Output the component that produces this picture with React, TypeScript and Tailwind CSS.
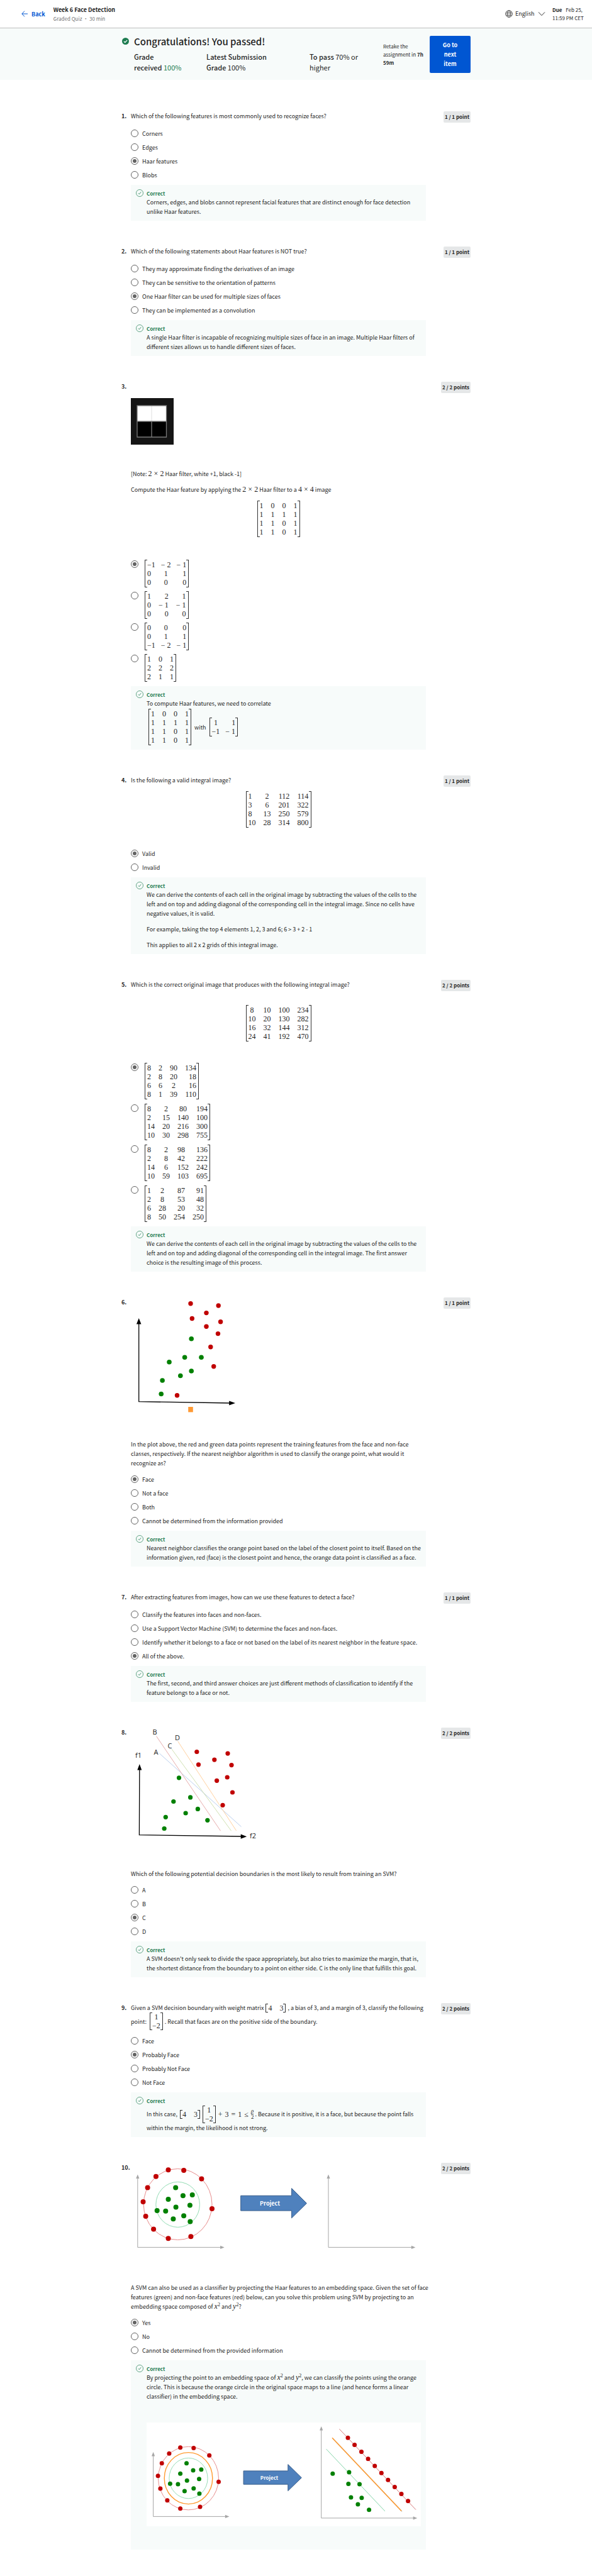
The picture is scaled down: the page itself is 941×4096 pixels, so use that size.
import React from "react";

type Align = "l" | "c" | "r";
type Dot = [number, number];

const RED = "#c00000";
const GREEN = "#008000";
const ALIGN = { l: "justify-self-start", c: "justify-self-center", r: "justify-self-end" };
const COLS: Record<number, string> = {
  1: "grid-cols-[auto]",
  2: "grid-cols-[auto_auto]",
  3: "grid-cols-[auto_auto_auto]",
  4: "grid-cols-[auto_auto_auto_auto]",
};
const GAPS = { tight: "gap-x-[9px]", normal: "gap-x-3", wide: "gap-x-4" };
const OPTION_GAPS = { none: "", small: "gap-1.5 pb-0.5", large: "gap-[7px] pb-0.5" };

function Matrix({
  rows,
  align = "cccc",
  gap = "normal",
  pad = true,
}: {
  rows: string[];
  align?: string;
  gap?: keyof typeof GAPS;
  pad?: boolean;
}) {
  const cells = rows.map((r) => r.split(","));
  return (
    <span role="math" className="inline-flex align-middle font-['Liberation_Serif',serif] text-[12px] leading-[14px] text-[#1f1f1f]">
      <span className="w-1 border-y border-l border-[#333]" />
      <span className={`grid ${COLS[cells[0].length]} ${GAPS[gap]} ${pad ? "py-px" : ""}`}>
        {cells.flatMap((row, i) =>
          row.map((cell, j) => (
            <span key={`${i}-${j}`} className={`whitespace-nowrap ${ALIGN[align[j] as Align]}`}>
              {cell}
            </span>
          )),
        )}
      </span>
      <span className="w-1 border-y border-r border-[#333]" />
    </span>
  );
}

function M({ children }: { children: React.ReactNode }) {
  return <span className="font-['Liberation_Serif',serif] text-[12px] leading-[14px]">{children}</span>;
}

function Pow({ base }: { base: string }) {
  return (
    <M>
      <i>{base}</i>
      <sup className="text-[8px] leading-none">2</sup>
    </M>
  );
}

function Options({
  name,
  items,
  checked,
  matrix = "none",
}: {
  name: string;
  items: React.ReactNode[];
  checked: number;
  matrix?: keyof typeof OPTION_GAPS;
}) {
  const isMatrix = matrix !== "none";
  return (
    <div role="radiogroup" aria-label={name} className={`flex flex-col ${OPTION_GAPS[matrix]}`}>
      {items.map((item, i) => (
        <label key={i} className={isMatrix ? "flex items-start gap-[10px]" : "flex h-[22px] items-center gap-1.5"}>
          <input
            type="radio"
            name={name}
            defaultChecked={i === checked}
            className={`h-3 w-3 shrink-0 appearance-none rounded-full border border-[#636363] bg-clip-content p-[2px] checked:bg-[#636363] ${isMatrix ? "mt-px" : ""}`}
          />
          <span className={isMatrix ? "flex" : ""}>{item}</span>
        </label>
      ))}
    </div>
  );
}

function Feedback({ children }: { children: React.ReactNode }) {
  return (
    <div className="mt-[5px] flex gap-[5px] bg-[#f7fbfa] px-2 py-[7px]">
      <svg viewBox="0 0 18 18" className="h-3 w-3 shrink-0" fill="none" stroke="#1d7c50">
        <circle cx="9" cy="9" r="8.3" />
        <path d="M5.6 9.2l2.4 2.5 4.3-5.5" strokeWidth="1.2" />
      </svg>
      <div className="min-w-0 flex-1">
        <div className="text-[8px] leading-[13px] font-bold text-[#1d7c50]">Correct</div>
        {children}
      </div>
    </div>
  );
}

function Question({ n, points, children }: { n: number; points: number; children: React.ReactNode }) {
  return (
    <section className="grid grid-cols-[15px_minmax(0,1fr)_71px] items-start">
      <span className="font-bold whitespace-nowrap">{n}.</span>
      <div>{children}</div>
      <span className="justify-self-end rounded-[2px] bg-[#e5e7e8] px-[2px] text-[8px] leading-[18px] font-bold whitespace-nowrap">
        {points} / {points} {points === 1 ? "point" : "points"}
      </span>
    </section>
  );
}

function Dots({ points, color, r }: { points: Dot[]; color: string; r: number }) {
  return (
    <g fill={color}>
      {points.map(([x, y]) => (
        <circle key={`${x},${y}`} cx={x} cy={y} r={r} />
      ))}
    </g>
  );
}

function GrayAxes({ x, top, bottom, right }: { x: number; top: number; bottom: number; right: number }) {
  return (
    <g fill="#a6a6a6" stroke="none">
      <path d={`M${x} ${top + 4}V${bottom}H${right - 4}`} fill="none" stroke="#a6a6a6" />
      <path d={`M${x} ${top}l2.6 6.6h-5.2z`} />
      <path d={`M${right} ${bottom}l-6.6 -2.6v5.2z`} />
    </g>
  );
}

function HaarImage() {
  return (
    <svg viewBox="0 0 68 74" className="h-[74px] w-[68px]" role="img" aria-label="Haar filter">
      <rect width="68" height="74" fill="#151515" />
      <rect x="10" y="12" width="46.5" height="50" fill="#000" />
      <rect x="10" y="12" width="46.5" height="25" fill="#fff" />
      <path d="M33 12v25" stroke="#e8e8e8" strokeWidth="1.4" />
      <path d="M10 12h46.5v50H10zM10 37h46.5M33 37v25" fill="none" stroke="#7a7a7a" strokeWidth="1.3" />
    </svg>
  );
}

function NeighborPlot() {
  return (
    <svg viewBox="0 0 180 187" className="h-[187px] w-[180px]" role="img" aria-label="Training features">
      <path d="M12.7 40V165.7L160 168" fill="none" stroke="#000" strokeWidth="1.3" />
      <path d="M12.7 33l3.8 9.6h-7.6zM166 168l-9.8 -3.6v7.2z" />
      <Dots
        r={3.7}
        color={RED}
        points={[[95, 9.8], [139.2, 13], [120, 24.6], [97.3, 33.5], [142.6, 38.8], [120, 46.3], [138.5, 57.6], [126.8, 78.7], [131.7, 109.8], [73.5, 155.8]]}
      />
      <Dots
        r={3.8}
        color={GREEN}
        points={[[96.2, 65.7], [85.6, 95.3], [112, 95.3], [61, 102.8], [96.2, 117], [78.8, 124.5], [50.1, 132], [48.2, 153.5]]}
      />
      <rect x="91.2" y="174" width="7.6" height="8.4" fill="#ff9933" />
    </svg>
  );
}

function BoundaryPlot() {
  return (
    <svg viewBox="0 0 210 186" className="h-[186px] w-[210px]" role="img" aria-label="Decision boundaries">
      <g strokeWidth="0.9">
        <path d="M45.5 41.1L175.5 157.6" stroke="#b3caec" />
        <path d="M40.6 13.7L142.6 164.2" stroke="#e3a3a3" />
        <path d="M64.8 34L159.6 164.2" stroke="#cbdcaa" />
        <path d="M74.6 21.6L167.6 163.9" stroke="#ffcb94" />
      </g>
      <path d="M13.8 66L13.4 170.7L178 173" fill="none" stroke="#000" strokeWidth="1.3" />
      <path d="M13.8 58l3.5 9.6h-7zM184.2 173.2l-9.5 -3.6v7.2z" />
      <Dots
        r={3.6}
        color={RED}
        points={[[104.8, 38.5], [154, 41.1], [132.8, 51.1], [107.5, 58.8], [160, 59.6], [153.2, 79], [136.6, 84.3], [161.5, 103], [146, 123.3]]}
      />
      <Dots
        r={3.6}
        color={GREEN}
        points={[[76.5, 79.8], [94.6, 110.9], [67.8, 117.5], [106.4, 129.4], [87.1, 136], [55.3, 142.3], [121.8, 147.3], [53.1, 160.5]]}
      />
      <g fontFamily="Open Sans, sans-serif" fontSize="11" fill="#222" textAnchor="middle">
        <text x="38" y="11">B</text>
        <text x="74" y="20">D</text>
        <text x="62" y="33">C</text>
        <text x="40" y="43">A</text>
        <text x="12" y="48">f1</text>
        <text x="194" y="176">f2</text>
      </g>
    </svg>
  );
}

function ProjectionPlot() {
  return (
    <svg viewBox="0 0 469 152" className="block w-full" role="img" aria-label="Projection to embedding space">
      <GrayAxes x={10.8} top={18.5} bottom={134.4} right={148.7} />
      <GrayAxes x={314} top={18.5} bottom={134.4} right={452.4} />
      <ellipse cx="74.6" cy="66" rx="54.4" ry="56.5" fill="none" stroke="#e88b8b" />
      <ellipse cx="74.6" cy="66.4" rx="34.8" ry="36" fill="none" stroke="#92dcb3" />
      <Dots
        r={4}
        color={RED}
        points={[[59.5, 11.2], [84.1, 11.9], [112.4, 25.4], [39.9, 21.7], [26.6, 39.6], [19.5, 62.1], [129, 72.9], [23.6, 84.9], [36.1, 105.5], [95.4, 117.2], [59.5, 120.2]]}
      />
      <Dots
        r={4}
        color={GREEN}
        points={[[71.2, 39.6], [82.9, 52.3], [97.7, 50.9], [59.5, 58], [93.9, 67.6], [71.6, 70.4], [41.7, 76.1], [55.3, 76.8], [84.1, 84.2], [67.4, 89.2], [94.3, 93.6]]}
      />
      <path d="M174.7 52.3H255.6V40.6L279.4 64.4L255.6 87.8V76.1H174.7z" fill="#4f81bd" stroke="#385d8a" />
      <text x="221" y="68" textAnchor="middle" fontSize="9" fontWeight="bold" fill="#fff">Project</text>
    </svg>
  );
}

function SolutionPlot() {
  return (
    <svg viewBox="0 0 436 165" className="block w-full bg-white" role="img" aria-label="Linear classifier in embedding space">
      <GrayAxes x={10.6} top={46.8} bottom={149.4} right={131.5} />
      <GrayAxes x={277.7} top={6} bottom={151.9} right={430.3} />
      <ellipse cx="66.5" cy="88.6" rx="48" ry="50.3" fill="none" stroke="#df7272" strokeWidth="0.8" />
      <ellipse cx="66.5" cy="88.6" rx="38.3" ry="41" fill="none" stroke="#ff9a2e" strokeWidth="1.4" />
      <ellipse cx="66.5" cy="88.6" rx="30.6" ry="32.2" fill="none" stroke="#7fd3a5" strokeWidth="0.8" />
      <path d="M306.4 10.3L428 138.6" stroke="#d97c7c" />
      <path d="M296 25.3L406 141.5" stroke="#c9c4bd" strokeWidth="1.4" />
      <path d="M295 24.3L405 140.5" stroke="#ff9a2e" strokeWidth="1.5" />
      <path d="M285.6 42.2L378.9 140.9" stroke="#86d6ab" />
      <Dots
        r={3.5}
        color={RED}
        points={[[53.6, 39.7], [74.8, 40.4], [99.7, 52.3], [35.9, 49.3], [24.2, 64.7], [18.1, 84.7], [114.5, 94.3], [21.9, 105.1], [32.9, 123.7], [85, 134], [53.6, 136.8], [320, 24.3], [330.6, 35.6], [341.5, 46.6], [352.1, 57.8], [362.7, 69.1], [373.3, 80.3], [383.8, 91.3], [394.4, 102.4], [405, 113.6], [415.6, 124.8]]}
      />
      <Dots
        r={3.5}
        color={GREEN}
        points={[[63.5, 64.7], [74, 76], [86.9, 74.8], [53.6, 81.2], [83.5, 89.7], [64.2, 92.3], [37.4, 97.3], [49.9, 98], [74.8, 104.7], [60.4, 109], [83.9, 113.1], [295.8, 81.2], [321.9, 78.9], [320.8, 97.5], [338.5, 98], [324.9, 118.9], [341.9, 119.8], [335.9, 130.1], [353.6, 138.8]]}
      />
      <path d="M154.1 76.9H224.8V66.6L246.3 87.7L224.8 108.6V98.2H154.1z" fill="#4f81bd" stroke="#385d8a" />
      <text x="195" y="91" textAnchor="middle" fontSize="8" fontWeight="bold" fill="#fff">Project</text>
    </svg>
  );
}

function Header() {
  return (
    <header className="flex h-[45px] items-center border-b border-[#bdbdbd] pr-[15px] pl-[34px]">
      <a href="#back" className="flex items-center gap-1.5 text-[9px] font-bold text-[#0056d2]">
        <svg viewBox="0 0 10 10" className="h-2.5 w-2.5" fill="none" stroke="#0056d2">
          <path d="M10 5H.8M5 .6L.8 5L5 9.4" />
        </svg>
        Back
      </a>
      <div className="ml-[13px] flex-1">
        <h1 className="text-[9px] leading-[14px] font-bold">Week 6 Face Detection</h1>
        <p className="text-[8px] leading-[13px] text-[#767676]">Graded Quiz • 30 min</p>
      </div>
      <div className="flex items-center">
        <svg viewBox="0 0 16 16" className="mr-1 h-3 w-3" fill="none" stroke="#333">
          <circle cx="8" cy="8" r="7.2" />
          <ellipse cx="8" cy="8" rx="3.2" ry="7.2" />
          <path d="M1 8h14M2 4.6h12M2 11.4h12" />
        </svg>
        <label className="flex items-center">
          <span className="sr-only">Language</span>
          <select className="h-[22px] w-[52px] appearance-none bg-transparent text-[9px] leading-[22px]" defaultValue="en">
            <option value="en">English</option>
          </select>
          <svg viewBox="0 0 12 12" className="mr-[11px] -ml-4 h-3 w-3" fill="none" stroke="#333">
            <path d="M1 3.4l5 5.2l5 -5.2" />
          </svg>
        </label>
        <p className="w-[48px] text-[8px] leading-[13px] whitespace-nowrap">
          <b className="mr-1">Due</b> Feb 25,
          <br />
          11:59 PM CET
        </p>
      </div>
    </header>
  );
}

function Banner() {
  return (
    <div className="bg-[#f7fbfa] pt-[11px] pb-[11px]">
      <div className="mx-auto flex w-full max-w-[555px] items-center">
        <svg viewBox="0 0 16 16" className="mt-1 mr-2 ml-px h-[11px] w-[11px] self-start">
          <circle cx="8" cy="8" r="8" fill="#1d7c50" />
          <path d="M4.2 8.2l2.7 2.7l5 -5.2" fill="none" stroke="#fff" strokeWidth="1.8" />
        </svg>
        <div className="flex-1">
          <h2 className="mb-1.5 text-[15px] leading-5 font-medium">Congratulations! You passed!</h2>
          <div className="grid grid-cols-[115px_164px_1fr] text-[11px] leading-[17px]">
            <p><b className="font-medium">Grade<br />received</b> <span className="text-[#1d7c50]">100%</span></p>
            <p><b className="font-medium">Latest Submission<br />Grade</b> 100%</p>
            <p><b className="font-medium">To pass</b> 70% or<br />higher</p>
          </div>
        </div>
        <p className="w-[74px] text-[8px] leading-[13px] whitespace-nowrap">
          Retake the<br />assignment in <b>7h<br />59m</b>
        </p>
        <button className="w-[65px] rounded-[2px] bg-[#0056d2] py-[7px] text-[9px] leading-[15px] font-bold text-white">
          Go to<br />next<br />item
        </button>
      </div>
    </div>
  );
}

const FOUR = ["1,0,0,1", "1,1,1,1", "1,1,0,1", "1,1,0,1"];

export default function App() {
  return (
    <div className="min-h-screen bg-white font-['Noto_Sans_CJK_SC',sans-serif] text-[9px] leading-[15px] text-[#1f1f1f]">
      <Header />
      <Banner />
      <main className="mx-auto flex w-full max-w-[555px] flex-col gap-[41px] pt-[50px] pb-10">
        <Question n={1} points={1}>
          <p className="mb-[9px]">Which of the following features is most commonly used to recognize faces?</p>
          <Options name="q1" checked={2} items={["Corners", "Edges", "Haar features", "Blobs"]} />
          <Feedback>
            <p>Corners, edges, and blobs cannot represent facial features that are distinct enough for face detection unlike Haar features.</p>
          </Feedback>
        </Question>

        <Question n={2} points={1}>
          <p className="mb-[9px]">Which of the following statements about Haar features is NOT true?</p>
          <Options
            name="q2"
            checked={2}
            items={[
              "They may approximate finding the derivatives of an image",
              "They can be sensitive to the orientation of patterns",
              "One Haar filter can be used for multiple sizes of faces",
              "They can be implemented as a convolution",
            ]}
          />
          <Feedback>
            <p>A single Haar filter is incapable of recognizing multiple sizes of face in an image. Multiple Haar filters of different sizes allows us to handle different sizes of faces.</p>
          </Feedback>
        </Question>

        <Question n={3} points={2}>
          <div className="pt-[26px] pb-[39px]"><HaarImage /></div>
          <p className="mb-2.5 h-[15px]">[Note: <M>2 × 2</M> Haar filter, white +1, black -1]</p>
          <p className="h-[15px]">Compute the Haar feature by applying the <M>2 × 2</M> Haar filter to a <M>4 × 4</M> image</p>
          <div className="flex justify-center pt-2.5 pb-9"><Matrix rows={FOUR} /></div>
          <Options
            name="q3"
            matrix="small"
            checked={0}
            items={[
              <Matrix gap="tight" align="lcr" rows={["−1,− 2,− 1", "0,1,1", "0,0,0"]} />,
              <Matrix align="lrr" rows={["1,2,1", "0,− 1,− 1", "0,0,0"]} />,
              <Matrix gap="tight" align="lcr" rows={["0,0,0", "0,1,1", "−1,− 2,− 1"]} />,
              <Matrix rows={["1,0,1", "2,2,2", "2,1,1"]} />,
            ]}
          />
          <Feedback>
            <p>To compute Haar features, we need to correlate</p>
            <div className="flex items-center gap-[5px] pt-px pl-[3px]">
              <Matrix rows={FOUR} />
              <span>with</span>
              <Matrix gap="tight" align="cr" rows={["1,1", "−1,− 1"]} />
            </div>
          </Feedback>
        </Question>

        <Question n={4} points={1}>
          <p>Is the following a valid integral image?</p>
          <div className="flex justify-center pt-2.5 pb-[30px]">
            <Matrix align="lccc" rows={["1,2,112,114", "3,6,201,322", "8,13,250,579", "10,28,314,800"]} />
          </div>
          <Options name="q4" checked={0} items={["Valid", "Invalid"]} />
          <Feedback>
            <p>We can derive the contents of each cell in the original image by subtracting the values of the cells to the left and on top and adding diagonal of the corresponding cell in the integral image. Since no cells have negative values, it is valid.</p>
            <p className="mt-2.5">For example, taking the top 4 elements 1, 2, 3 and 6; 6 &gt; 3 + 2 - 1</p>
            <p className="mt-2.5">This applies to all 2 x 2 grids of this integral image.</p>
          </Feedback>
        </Question>

        <Question n={5} points={2}>
          <p>Which is the correct original image that produces with the following integral image?</p>
          <div className="flex justify-center pt-[25px] pb-[34px]">
            <Matrix rows={["8,10,100,234", "10,20,130,282", "16,32,144,312", "24,41,192,470"]} />
          </div>
          <Options
            name="q5"
            matrix="large"
            checked={0}
            items={[
              <Matrix align="cccr" rows={["8,2,90,134", "2,8,20,18", "6,6,2,16", "8,1,39,110"]} />,
              <Matrix align="lccr" rows={["8,2,80,194", "2,15,140,100", "14,20,216,300", "10,30,298,755"]} />,
              <Matrix align="lclr" rows={["8,2,98,136", "2,8,42,222", "14,6,152,242", "10,59,103,695"]} />,
              <Matrix align="ccrr" rows={["1,2,87,91", "2,8,53,48", "6,28,20,32", "8,50,254,250"]} />,
            ]}
          />
          <Feedback>
            <p>We can derive the contents of each cell in the original image by subtracting the values of the cells to the left and on top and adding diagonal of the corresponding cell in the integral image. The first answer choice is the resulting image of this process.</p>
          </Feedback>
        </Question>

        <Question n={6} points={1}>
          <div className="pb-[39px]"><NeighborPlot /></div>
          <p className="mb-[7px]">In the plot above, the red and green data points represent the training features from the face and non-face classes, respectively. If the nearest neighbor algorithm is used to classify the orange point, what would it recognize as?</p>
          <Options name="q6" checked={0} items={["Face", "Not a face", "Both", "Cannot be determined from the information provided"]} />
          <Feedback>
            <p>Nearest neighbor classifies the orange point based on the label of the closest point to itself. Based on the information given, red (face) is the closest point and hence, the orange data point is classified as a face.</p>
          </Feedback>
        </Question>

        <Question n={7} points={1}>
          <p className="mb-[9px]">After extracting features from images, how can we use these features to detect a face?</p>
          <Options
            name="q7"
            checked={3}
            items={[
              "Classify the features into faces and non-faces.",
              "Use a Support Vector Machine (SVM) to determine the faces and non-faces.",
              "Identify whether it belongs to a face or not based on the label of its nearest neighbor in the feature space.",
              "All of the above.",
            ]}
          />
          <Feedback>
            <p>The first, second, and third answer choices are just different methods of classification to identify if the feature belongs to a face or not.</p>
          </Feedback>
        </Question>

        <Question n={8} points={2}>
          <div className="pb-[39px]"><BoundaryPlot /></div>
          <p className="mb-[7px]">Which of the following potential decision boundaries is the most likely to result from training an SVM?</p>
          <Options name="q8" checked={2} items={["A", "B", "C", "D"]} />
          <Feedback>
            <p>A SVM doesn't only seek to divide the space appropriately, but also tries to maximize the margin, that is, the shortest distance from the boundary to a point on either side. C is the only line that fulfills this goal.</p>
          </Feedback>
        </Question>

        <Question n={9} points={2}>
          <div className="mb-1.5">
            <div className="flex h-[15px] items-center gap-[3px] whitespace-nowrap">
              <span>Given a SVM decision boundary with weight matrix</span>
              <Matrix pad={false} gap="normal" rows={["4,3"]} />
              <span>, a bias of 3, and a margin of 3, classify the following</span>
            </div>
            <div className="flex items-center gap-[3px] whitespace-nowrap">
              <span className="mr-0.5">point:</span>
              <Matrix pad={false} align="c" rows={["1", "−2"]} />
              <span>. Recall that faces are on the positive side of the boundary.</span>
            </div>
          </div>
          <Options name="q9" checked={1} items={["Face", "Probably Face", "Probably Not Face", "Not Face"]} />
          <Feedback>
            <div className="flex h-[29px] items-center gap-1 whitespace-nowrap">
              <span>In this case,</span>
              <Matrix pad={false} rows={["4,3"]} />
              <Matrix pad={false} rows={["1", "−2"]} />
              <M>+</M>
              <M>3</M>
              <M>=</M>
              <M>1</M>
              <M>≤</M>
              <span className="flex items-center gap-0.5">
                <span className="inline-flex flex-col items-center font-['Liberation_Serif',serif] text-[9px] leading-[9px]">
                  <i className="border-b border-[#333]">ρ</i>
                  <span>2</span>
                </span>
                <span>. Because it is positive, it is a face, but because the point falls</span>
              </span>
            </div>
            <p>within the margin, the likelihood is not strong.</p>
          </Feedback>
        </Question>

        <Question n={10} points={2}>
          <div className="pb-[39px]"><ProjectionPlot /></div>
          <p className="-mr-2 mb-[7px]">A SVM can also be used as a classifier by projecting the Haar features to an embedding space. Given the set of face features (green) and non-face features (red) below, can you solve this problem using SVM by projecting to an embedding space composed of <Pow base="x" /> and <Pow base="y" />?</p>
          <Options name="q10" checked={0} items={["Yes", "No", "Cannot be determined from the provided information"]} />
          <Feedback>
            <p>By projecting the point to an embedding space of <Pow base="x" /> and <Pow base="y" />, we can classify the points using the orange circle. This is because the orange circle in the original space maps to a line (and hence forms a linear classifier) in the embedding space.</p>
            <div className="pt-[34px] pb-[30px]"><SolutionPlot /></div>
          </Feedback>
        </Question>
      </main>
    </div>
  );
}
